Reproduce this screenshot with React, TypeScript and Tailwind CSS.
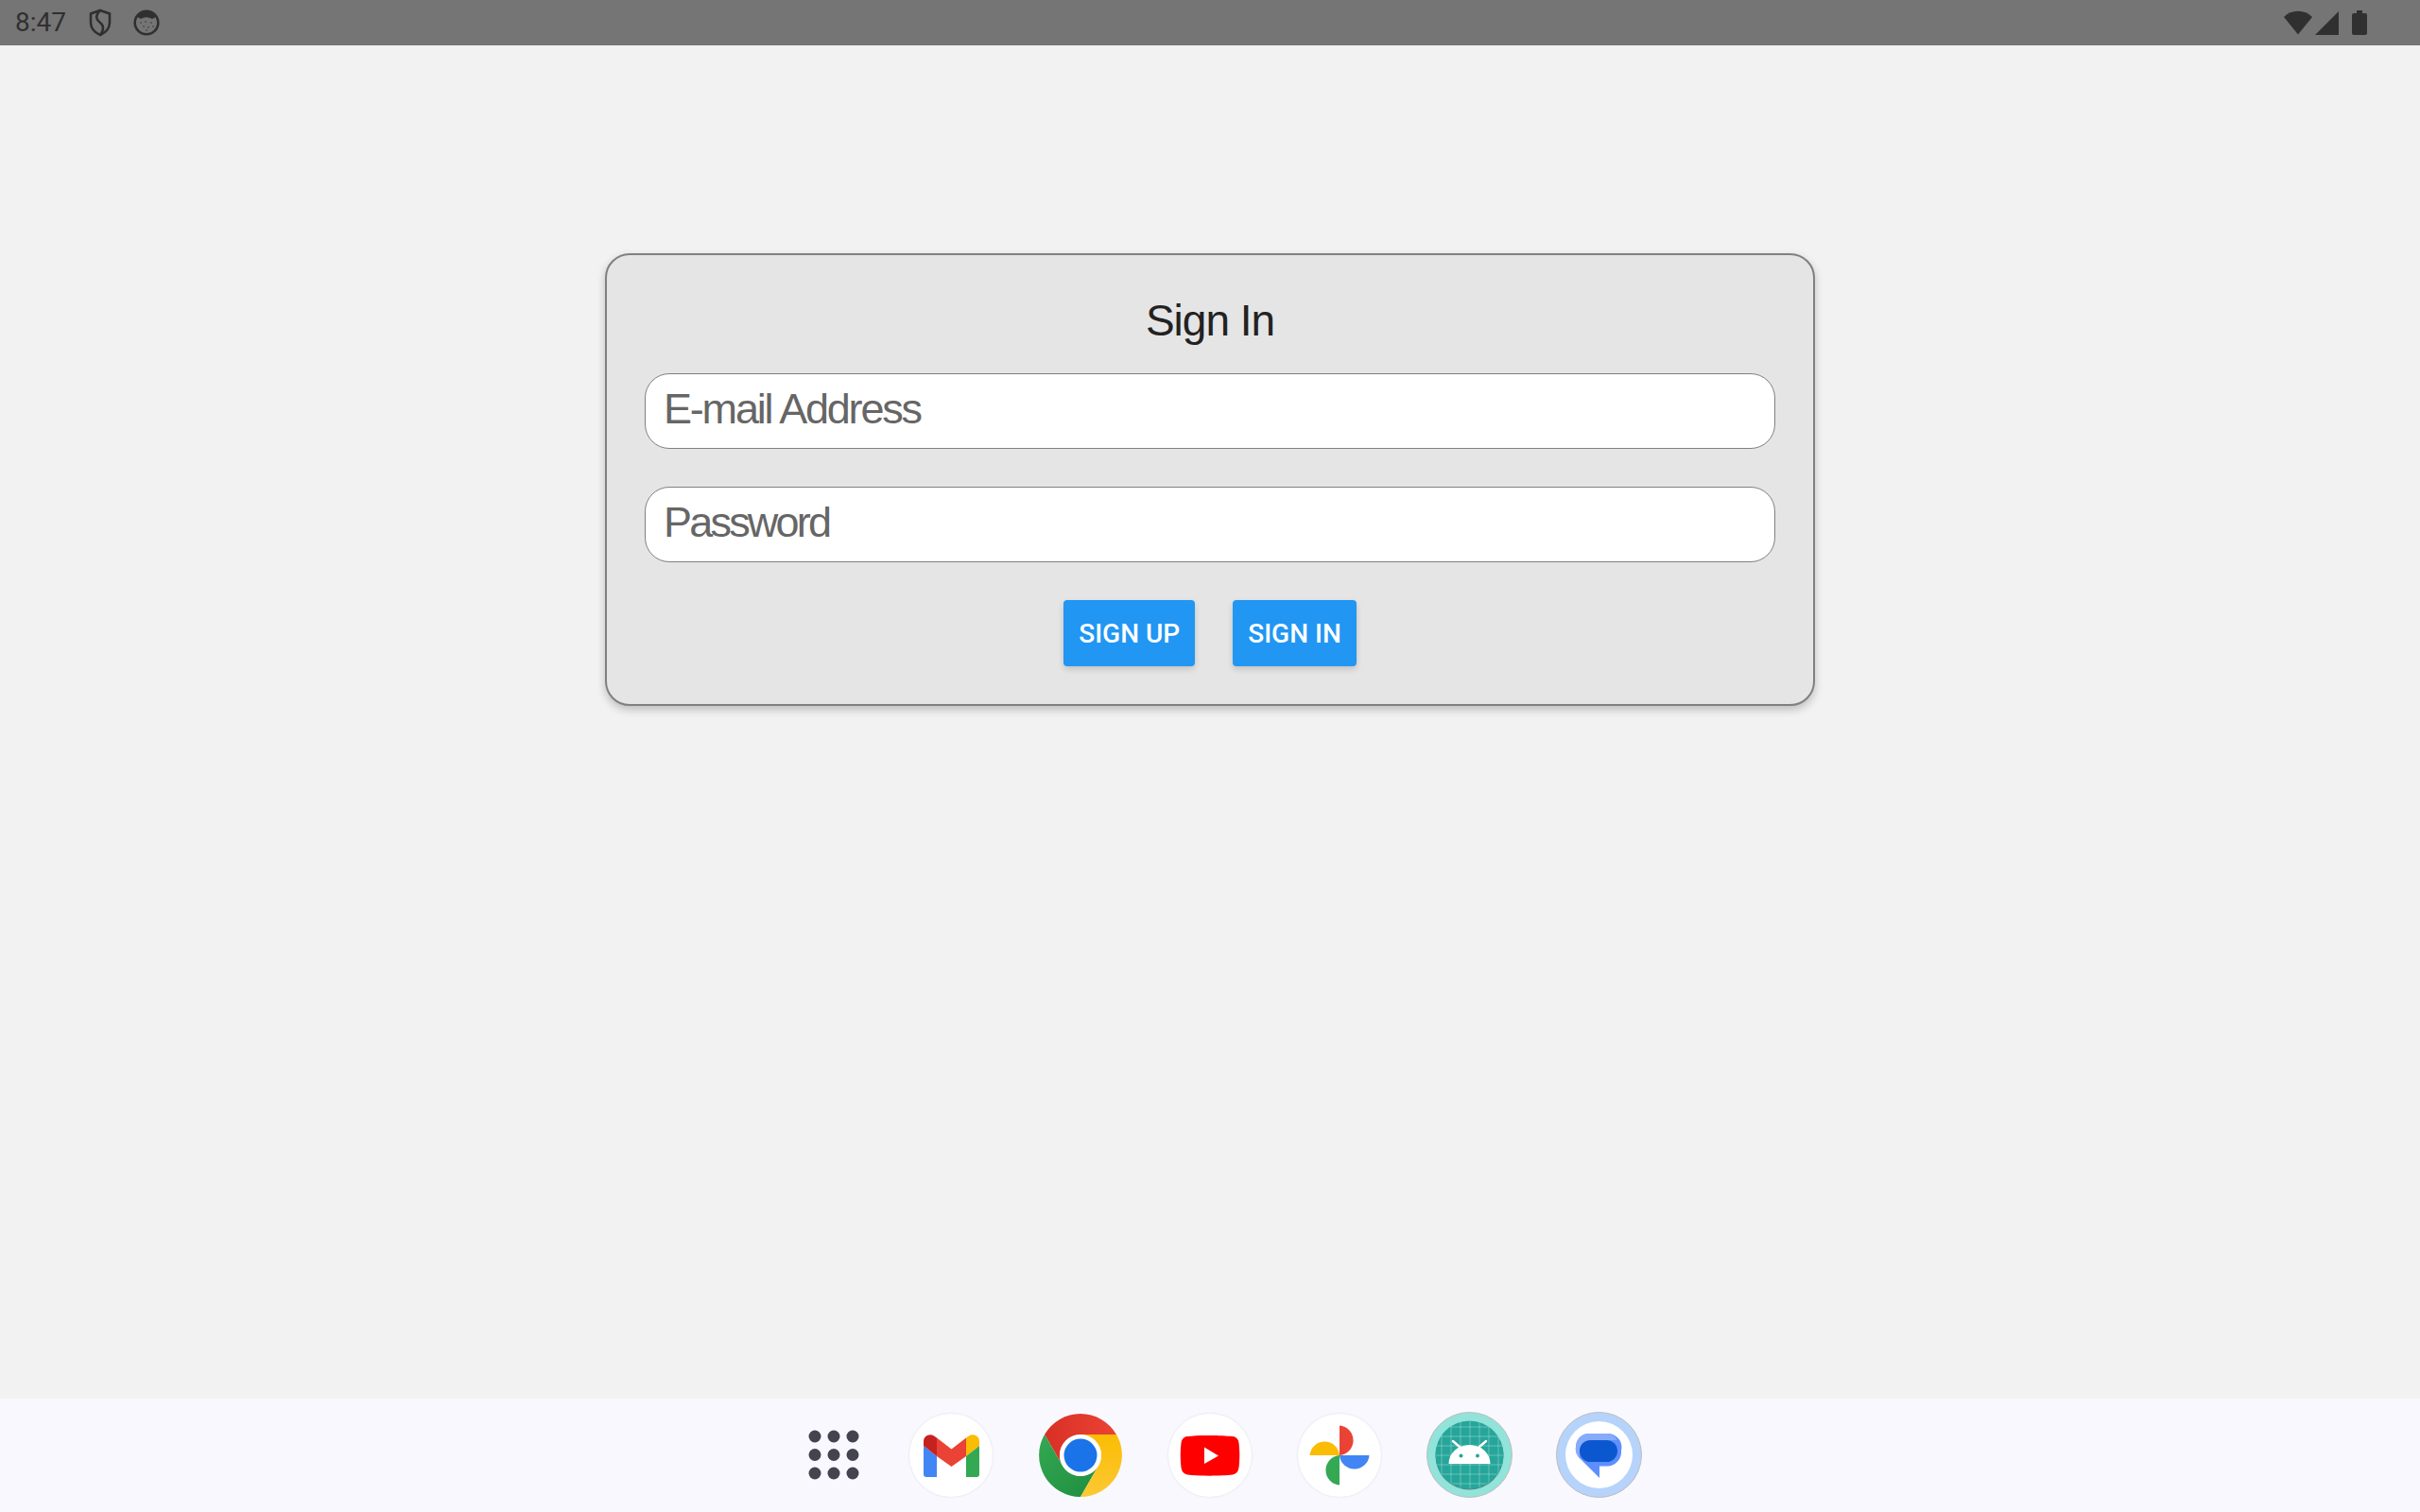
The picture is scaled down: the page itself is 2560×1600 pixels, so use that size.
import React from "react";

const techno = "font-['Liberation_Sans',sans-serif]";

const StatusLeft = () => (
  <div className="flex items-center">
    <span className="font-['Roboto',sans-serif] text-[28px] leading-none font-normal text-[#303030]">8:47</span>
    <svg className="ml-[24px]" width="24" height="30" viewBox="0 0 24 30" fill="none" stroke="#303030" strokeWidth="2.6">
      <path d="M12 2 L22 5.5 V15 C22 21 17.5 25.5 12 28 C6.5 25.5 2 21 2 15 V5.5 Z" />
      <path d="M12 2 C6 8 8 12 12 15 C16 18 16 23 12 28" />
    </svg>
    <svg className="ml-[23px]" width="28" height="28" viewBox="0 0 28 28">
      <circle cx="14" cy="14" r="12.3" fill="none" stroke="#303030" strokeWidth="2.6" />
      <path d="M4 8 A12 12 0 0 1 24 8 C21 9 20 11 18 9 C15 8 12 8 10 9 C8 11 7 9 4 8Z" fill="#303030" />
      <g fill="#505050">
        <circle cx="8" cy="14" r="1" />
        <circle cx="13" cy="13" r="1" />
        <circle cx="19" cy="14" r="1" />
        <circle cx="11" cy="18" r="1" />
        <circle cx="16" cy="19" r="1" />
        <circle cx="21" cy="18" r="1" />
        <circle cx="14" cy="22" r="1" />
      </g>
    </svg>
  </div>
);

const StatusRight = () => (
  <div className="flex items-center">
    <svg width="30" height="26" viewBox="0 0 30 26">
      <path d="M0 7 C8 -1.5 22 -1.5 30 7 L15 25.5 Z" fill="#303030" />
    </svg>
    <svg className="ml-[3px]" width="25" height="25" viewBox="0 0 25 25">
      <path d="M25 0 V25 H0 Z" fill="#303030" />
    </svg>
    <svg className="ml-[14px]" width="16" height="26" viewBox="0 0 16 26">
      <path d="M5 0 H11 V3 H14 A2 2 0 0 1 16 5 V24 A2 2 0 0 1 14 26 H2 A2 2 0 0 1 0 24 V5 A2 2 0 0 1 2 3 H5 Z" fill="#303030" />
    </svg>
  </div>
);

// white disc with a soft edge that most launcher icons sit on
const Disc = ({ children }: { children: React.ReactNode }) => (
  <svg width="88" height="88" viewBox="0 0 88 88" className="shrink-0 drop-shadow-[0_0_1px_rgba(0,0,0,0.12)]">
    <circle cx="44" cy="44" r="44" fill="#ffffff" />
    {children}
  </svg>
);

const AppsGrid = () => (
  <svg width="54" height="54" viewBox="0 0 54 54" className="mr-[4px] shrink-0">
    <g fill="#44444f">
      {[7, 26.5, 46].map((y) =>
        [7, 27, 47].map((x) => <circle key={`${x}-${y}`} cx={x} cy={y} r="6.5" />)
      )}
    </g>
  </svg>
);

const Gmail = () => (
  <Disc>
    <path d="M15 34 L29 45 V67 H18 A3 3 0 0 1 15 64 Z" fill="#4285F4" />
    <path d="M15 34 V29 A7 7 0 0 1 26 23.5 L29 25.5 V45 Z" fill="#C5221F" />
    <path d="M29 25.5 L44.5 37.5 L60 25.5 V45 L44.5 56 L29 45 Z" fill="#EA4335" />
    <path d="M60 25.5 L63 23.5 A7 7 0 0 1 74 29 V34 L60 45 Z" fill="#FBBC04" />
    <path d="M60 45 L74 34 V64 A3 3 0 0 1 71 67 H60 Z" fill="#34A853" />
  </Disc>
);

const Chrome = () => (
  <svg width="88" height="88" viewBox="0 0 88 88" className="shrink-0">
    <defs>
      <linearGradient id="chromeRed" x1="0" x2="1" y1="0" y2="0">
        <stop offset="0" stopColor="#D93025" />
        <stop offset="1" stopColor="#EA4335" />
      </linearGradient>
      <linearGradient id="chromeGreen" x1="0" x2="1" y1="0" y2="1">
        <stop offset="0" stopColor="#34A853" />
        <stop offset="1" stopColor="#1E8E3E" />
      </linearGradient>
      <linearGradient id="chromeYellow" x1="0" x2="0" y1="0" y2="1">
        <stop offset="0" stopColor="#FBBC04" />
        <stop offset="1" stopColor="#FCC934" />
      </linearGradient>
    </defs>
    <path d="M44 0 A44 44 0 0 1 82 22 H44 A22 22 0 0 0 25 55 L6 22 A44 44 0 0 1 44 0 Z" fill="url(#chromeRed)" />
    <path d="M6 22 L25 55 A22 22 0 0 0 63 55 L44 88 A44 44 0 0 1 6 22 Z" fill="url(#chromeGreen)" />
    <path d="M82 22 A44 44 0 0 1 44 88 L63 55 A22 22 0 0 0 44 22 Z" fill="url(#chromeYellow)" />
    <circle cx="44" cy="44" r="22" fill="#ffffff" />
    <circle cx="44" cy="44" r="17.5" fill="#1A73E8" />
  </svg>
);

const Youtube = () => (
  <Disc>
    <path d="M20 24 C32 22.5 56 22.5 68 24 C72 24.5 74 27 74.5 31 C75.5 39 75.5 49 74.5 57 C74 61 72 63.5 68 64.5 C56 66 32 66 20 64.5 C16 63.5 14 61 13.5 57 C12.5 49 12.5 39 13.5 31 C14 27 16 24.5 20 24 Z" fill="#FF0000" />
    <path d="M38 35.5 L53 44.5 L38 53 Z" fill="#ffffff" />
  </Disc>
);

const Photos = () => (
  <Disc>
    <path d="M44 12.5 A15.8 15.8 0 0 1 44 44 Z" fill="#EA4335" />
    <path d="M12.5 44 A15.8 15.8 0 0 1 44 44 Z" fill="#FBBC04" />
    <path d="M75.5 44 A15.8 15.8 0 0 1 44 44 Z" fill="#4285F4" />
    <path d="M44 75.5 A15.8 15.8 0 0 1 44 44 Z" fill="#34A853" />
  </Disc>
);

const AndroidApp = () => (
  <svg width="92" height="92" viewBox="0 0 92 92" className="ml-[-1px] shrink-0">
    <defs>
      <clipPath id="androidClip">
        <circle cx="45.5" cy="45.5" r="36" />
      </clipPath>
    </defs>
    <circle cx="45.5" cy="45.5" r="45" fill="#92E3DA" stroke="#bdbdbd" strokeWidth="1" />
    <circle cx="45.5" cy="46.5" r="36" fill="#4b8f88" />
    <g clipPath="url(#androidClip)">
      <rect x="9" y="9" width="73" height="72" fill="#26A69A" />
      <g stroke="#ffffff" strokeOpacity="0.3" strokeWidth="1">
        {[16, 26, 36, 46, 56, 66, 76].map((p) => (
          <React.Fragment key={p}>
            <line x1={p} y1="9" x2={p} y2="82" />
            <line x1="9" y1={p} x2="82" y2={p} />
          </React.Fragment>
        ))}
      </g>
    </g>
    <path d="M28 31 L35 37 M63 31 L56 37" stroke="#ffffff" strokeWidth="2.4" strokeLinecap="round" />
    <path d="M23.5 55 A22 20 0 0 1 67.5 55 Z" fill="#ffffff" />
    <circle cx="36.5" cy="46.5" r="2" fill="#26A69A" />
    <circle cx="54" cy="46.5" r="2" fill="#26A69A" />
  </svg>
);

const Messages = () => (
  <svg width="92" height="92" viewBox="0 0 92 92" className="ml-[-4px] shrink-0">
    <circle cx="45.5" cy="45.5" r="45" fill="#B6D3FB" stroke="#bdbdbd" strokeWidth="1" />
    <circle cx="45.5" cy="45.5" r="35.5" fill="#ffffff" />
    <path d="M21 37 A14 14 0 0 1 35 23 H54 A14.5 14.5 0 0 1 69 41 A15 15 0 0 1 54 57.5 H46 V70 L25 49 A14 14 0 0 1 21 37 Z" fill="#5E8FFF" />
    <path d="M21 37 A14 14 0 0 1 35 23 H54 A14 14 0 0 1 65 30 H36 A11 11 0 0 0 25 41 V49 A14 14 0 0 1 21 37 Z" fill="#86ABFB" />
    <rect x="25" y="30" width="40" height="23" rx="11.5" fill="#0B57D0" />
  </svg>
);

const Field = ({ placeholder, tracking, type }: { placeholder: string; tracking: string; type: string }) => (
  <input
    type={type}
    placeholder={placeholder}
    className={`block w-full h-[80px] rounded-[26px] border border-[#808080] bg-white pl-[19px] pb-1 text-[45px] text-[#666666] placeholder:text-[#666666] outline-none ${techno} ${tracking}`}
  />
);

export default function App() {
  return (
    <div className="flex h-screen flex-col bg-[#f2f2f2]">
      <div className="flex h-12 shrink-0 items-center justify-between bg-[#757575] pl-4 pr-[56px]">
        <StatusLeft />
        <StatusRight />
      </div>

      <div className="flex-1">
        <div className="mx-auto mt-[220px] w-[1280px] rounded-[26px] border-2 border-[#808080] bg-[#e5e5e5] px-[40px] pb-[40px] pt-[46px] shadow-[0_4px_10px_rgba(0,0,0,0.22)]">
          <h1 className={`mb-[33px] text-center text-[46px] leading-[46px] tracking-[-1px] text-[#222222] ${techno}`}>Sign In</h1>
          <div className="flex flex-col gap-[40px]">
            <Field placeholder="E-mail Address" tracking="tracking-[-2.2px]" type="email" />
            <Field placeholder="Password" tracking="tracking-[-2.8px]" type="password" />
          </div>
          <div className="mt-[40px] flex justify-center gap-[40px]">
            <button className="h-[70px] rounded-[4px] bg-[#2196F3] px-4 pt-[2px] font-['Roboto',sans-serif] text-[28px] font-medium text-white shadow-[0_3px_6px_rgba(0,0,0,0.16)]">SIGN UP</button>
            <button className="h-[70px] rounded-[4px] bg-[#2196F3] px-4 pt-[2px] font-['Roboto',sans-serif] text-[28px] font-medium text-white shadow-[0_3px_6px_rgba(0,0,0,0.16)]">SIGN IN</button>
          </div>
        </div>
      </div>

      <div className="flex h-[120px] shrink-0 items-center gap-[49px] bg-[#f9f8ff] pb-[1px] pl-[855px]">
        <AppsGrid />
        <Gmail />
        <Chrome />
        <Youtube />
        <Photos />
        <AndroidApp />
        <Messages />
      </div>
    </div>
  );
}
